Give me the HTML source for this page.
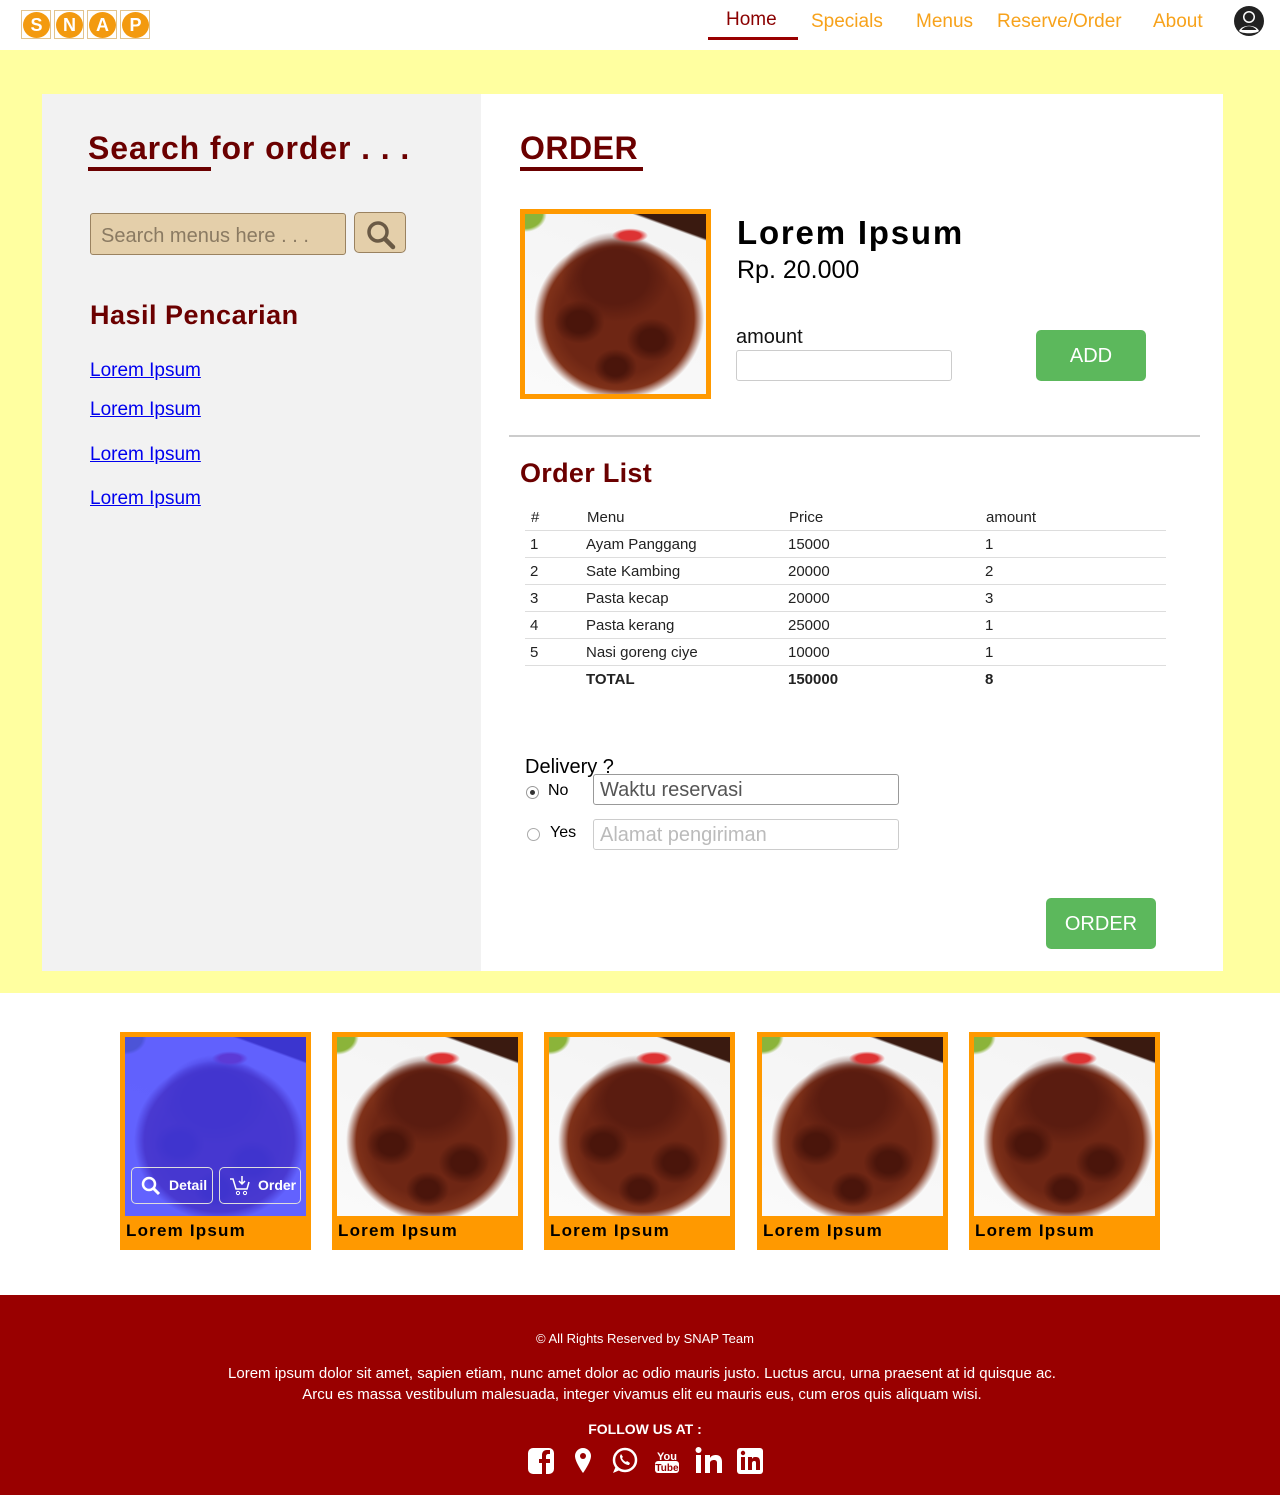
<!DOCTYPE html>
<html><head><meta charset="utf-8"><style>
*{margin:0;padding:0;box-sizing:border-box}
body{width:1280px;height:1495px;position:relative;font-family:"Liberation Sans",sans-serif;background:#fff;overflow:hidden}
.a{position:absolute}
.nav{font-size:19px;color:#f7a21b;top:11px}
.food{background:
radial-gradient(ellipse 10% 4% at 58% 12%, #d33 0 60%, transparent 100%),
radial-gradient(ellipse 14% 12% at 30% 60%, #4a150b 0 50%, transparent 100%),
radial-gradient(ellipse 14% 12% at 70% 70%, #4a150b 0 50%, transparent 100%),
radial-gradient(ellipse 12% 10% at 50% 85%, #4a150b 0 50%, transparent 100%),
radial-gradient(ellipse 30% 25% at 50% 35%, #5a1c10 0 60%, transparent 100%),
radial-gradient(ellipse 47% 45% at 52% 58%, #6e2614 0 70%, #7f3119 88%, rgba(120,50,25,0) 100%),
radial-gradient(ellipse 12% 10% at 0% 0%, #8bb43a 0 80%, transparent 100%),
linear-gradient(200deg,#3a1a10 0 10%, #f4f4f4 11%, #fafafa 100%)}
.logo span{display:inline-block;width:30px;height:29px;border:1px solid #e2c48e;margin-right:3px;position:relative}
.logo span b{position:absolute;left:1px;top:1px;width:27px;height:26px;border-radius:50%;background:#f39a0f;color:#fff;font-size:18px;text-align:center;line-height:26px;font-weight:900}
.lnk{color:#0000ee;text-decoration:underline;font-size:19px;left:90px}
.td{font-size:15px;color:#222}
.row{left:525px;width:641px;height:1px;background:#ddd}
.card{width:191px;height:218px;background:#f90}
.card .food{position:absolute;left:5px;top:5px;width:181px;height:179px}
.card .t{position:absolute;left:6px;top:189px;font-weight:900;font-size:17px;color:#000;letter-spacing:1.2px}
.ic{fill:#fff}
</style></head><body>
<div class="a logo" style="left:21px;top:10px"><span><b>S</b></span><span><b>N</b></span><span><b>A</b></span><span><b>P</b></span></div>
<div class="a nav" style="left:726px;color:#8b0000;top:9px">Home</div>
<div class="a" style="left:708px;top:37px;width:90px;height:3px;background:#990000"></div>
<div class="a nav" style="left:811px">Specials</div>
<div class="a nav" style="left:916px">Menus</div>
<div class="a nav" style="left:997px">Reserve/Order</div>
<div class="a nav" style="left:1153px">About</div>
<svg class="a" style="left:1233px;top:5px" width="32" height="32" viewBox="0 0 32 32"><circle cx="16" cy="16" r="15" fill="#222"/><circle cx="16" cy="12" r="6" fill="#fff"/><path d="M6 26c3-7 17-7 20 0c-3 3-17 3-20 0z" fill="#fff"/><circle cx="16" cy="12" r="4.5" fill="#222"/><path d="M8.5 25c3-5 12-5 15 0z" fill="#222"/></svg>

<div class="a" style="left:0;top:50px;width:1280px;height:943px;background:#ffffa0"></div>
<div class="a" style="left:42px;top:94px;width:439px;height:877px;background:#f2f2f2"></div>
<div class="a" style="left:481px;top:94px;width:742px;height:877px;background:#fff"></div>

<div class="a" style="left:88px;top:130px;font-size:32px;font-weight:bold;color:#6b0000;letter-spacing:0.9px">Search for order . . .</div>
<div class="a" style="left:88px;top:167px;width:123px;height:4px;background:#6b0000"></div>
<div class="a" style="left:90px;top:213px;width:256px;height:42px;background:#e4cfaa;border:1px solid #9a8260;border-radius:3px;font-size:20px;color:#8a7a62;padding:11px 10px">Search menus here . . .</div>
<div class="a" style="left:354px;top:212px;width:52px;height:41px;background:#e4cfaa;border:1px solid #9a8260;border-radius:5px"><svg width="52" height="41"><circle cx="23" cy="19" r="9" fill="none" stroke="#6a5a45" stroke-width="3.5"/><path d="M30 26l8 8" stroke="#6a5a45" stroke-width="4.5" stroke-linecap="round"/></svg></div>
<div class="a" style="left:90px;top:300px;font-size:27px;font-weight:bold;color:#6b0000;letter-spacing:0.5px">Hasil Pencarian</div>
<div class="a lnk" style="top:360px">Lorem Ipsum</div>
<div class="a lnk" style="top:399px">Lorem Ipsum</div>
<div class="a lnk" style="top:444px">Lorem Ipsum</div>
<div class="a lnk" style="top:488px">Lorem Ipsum</div>

<div class="a" style="left:520px;top:130px;font-size:32px;font-weight:bold;color:#6b0000;letter-spacing:0.5px">ORDER</div>
<div class="a" style="left:520px;top:167px;width:123px;height:4px;background:#6b0000"></div>
<div class="a" style="left:520px;top:209px;width:191px;height:190px;background:#f90"><div class="food" style="position:absolute;left:5px;top:5px;width:181px;height:180px"></div></div>
<div class="a" style="left:737px;top:214px;font-size:33px;font-weight:900;color:#000;letter-spacing:1.8px">Lorem Ipsum</div>
<div class="a" style="left:737px;top:256px;font-size:25px;color:#000">Rp. 20.000</div>
<div class="a" style="left:736px;top:326px;font-size:20px;color:#111">amount</div>
<div class="a" style="left:736px;top:350px;width:216px;height:31px;border:1px solid #ccc;border-radius:3px"></div>
<div class="a" style="left:1036px;top:330px;width:110px;height:51px;background:#5cb85c;border-radius:5px;color:#fff;font-size:20px;text-align:center;line-height:53px">ADD</div>
<div class="a" style="left:509px;top:435px;width:691px;height:2px;background:#ccc"></div>
<div class="a" style="left:520px;top:458px;font-size:27px;font-weight:bold;color:#6b0000;letter-spacing:0.3px">Order List</div>

<div class="a td" style="left:531px;top:509px">#</div><div class="a td" style="left:587px;top:509px">Menu</div><div class="a td" style="left:789px;top:509px">Price</div><div class="a td" style="left:986px;top:509px">amount</div>
<div class="a row" style="top:530px"></div>
<div class="a td" style="left:530px;top:536px">1</div><div class="a td" style="left:586px;top:536px">Ayam Panggang</div><div class="a td" style="left:788px;top:536px">15000</div><div class="a td" style="left:985px;top:536px">1</div>
<div class="a row" style="top:557px"></div>
<div class="a td" style="left:530px;top:563px">2</div><div class="a td" style="left:586px;top:563px">Sate Kambing</div><div class="a td" style="left:788px;top:563px">20000</div><div class="a td" style="left:985px;top:563px">2</div>
<div class="a row" style="top:584px"></div>
<div class="a td" style="left:530px;top:590px">3</div><div class="a td" style="left:586px;top:590px">Pasta kecap</div><div class="a td" style="left:788px;top:590px">20000</div><div class="a td" style="left:985px;top:590px">3</div>
<div class="a row" style="top:611px"></div>
<div class="a td" style="left:530px;top:617px">4</div><div class="a td" style="left:586px;top:617px">Pasta kerang</div><div class="a td" style="left:788px;top:617px">25000</div><div class="a td" style="left:985px;top:617px">1</div>
<div class="a row" style="top:638px"></div>
<div class="a td" style="left:530px;top:644px">5</div><div class="a td" style="left:586px;top:644px">Nasi goreng ciye</div><div class="a td" style="left:788px;top:644px">10000</div><div class="a td" style="left:985px;top:644px">1</div>
<div class="a row" style="top:665px"></div>
<div class="a td" style="left:586px;top:671px;font-weight:bold">TOTAL</div><div class="a td" style="left:788px;top:671px;font-weight:bold">150000</div><div class="a td" style="left:985px;top:671px;font-weight:bold">8</div>

<div class="a" style="left:525px;top:756px;font-size:20px;color:#000">Delivery ?</div>
<div class="a" style="left:526px;top:786px;width:13px;height:13px;border:1px solid #999;border-radius:50%"><div style="margin:3px;width:5px;height:5px;border-radius:50%;background:#333"></div></div>
<div class="a" style="left:548px;top:782px;font-size:16px">No</div>
<div class="a" style="left:593px;top:774px;width:306px;height:31px;border:1px solid #999;border-radius:3px;font-size:20px;color:#555;padding:4px 6px">Waktu reservasi</div>
<div class="a" style="left:527px;top:828px;width:13px;height:13px;border:1px solid #aaa;border-radius:50%"></div>
<div class="a" style="left:550px;top:824px;font-size:16px">Yes</div>
<div class="a" style="left:593px;top:819px;width:306px;height:31px;border:1px solid #ccc;border-radius:3px;font-size:20px;color:#bbb;padding:4px 6px">Alamat pengiriman</div>
<div class="a" style="left:1046px;top:898px;width:110px;height:51px;background:#5cb85c;border-radius:5px;color:#fff;font-size:20px;text-align:center;line-height:53px">ORDER</div>

<div class="a card" style="left:120px;top:1032px"><div class="food"></div><div style="position:absolute;left:5px;top:5px;width:181px;height:179px;background:rgba(60,60,255,.8)"></div>
<div style="position:absolute;left:11px;top:135px;width:82px;height:37px;border:1px solid #ddd;border-radius:5px;color:#fff;font-size:14px;font-weight:bold;padding:9px 0 0 37px">Detail<svg style="position:absolute;left:8px;top:7px" width="22" height="22"><circle cx="9" cy="9" r="6" fill="none" stroke="#fff" stroke-width="2.5"/><path d="M13 13l6 6" stroke="#fff" stroke-width="3"/></svg></div>
<div style="position:absolute;left:99px;top:135px;width:82px;height:37px;border:1px solid #ddd;border-radius:5px;color:#fff;font-size:14px;font-weight:bold;padding:9px 0 0 38px">Order<svg style="position:absolute;left:9px;top:6px" width="24" height="24"><path d="M1 5h3l3 10h11l2-7" fill="none" stroke="#fff" stroke-width="1.5"/><path d="M13 2v8m-3-3l3 3 3-3" fill="none" stroke="#fff" stroke-width="1.5"/><circle cx="9" cy="19" r="1.6" fill="none" stroke="#fff"/><circle cx="16" cy="19" r="1.6" fill="none" stroke="#fff"/></svg></div>
<div class="t">Lorem Ipsum</div></div>
<div class="a card" style="left:332px;top:1032px"><div class="food"></div><div class="t">Lorem Ipsum</div></div>
<div class="a card" style="left:544px;top:1032px"><div class="food"></div><div class="t">Lorem Ipsum</div></div>
<div class="a card" style="left:757px;top:1032px"><div class="food"></div><div class="t">Lorem Ipsum</div></div>
<div class="a card" style="left:969px;top:1032px"><div class="food"></div><div class="t">Lorem Ipsum</div></div>

<div class="a" style="left:0;top:1295px;width:1280px;height:200px;background:#990000;color:#fff;text-align:center">
<div style="position:absolute;top:36px;width:100%;font-size:13px;left:5px">© All Rights Reserved by SNAP Team</div>
<div style="position:absolute;top:68px;width:100%;font-size:15px;line-height:21px;left:2px">Lorem ipsum dolor sit amet, sapien etiam, nunc amet dolor ac odio mauris justo. Luctus arcu, urna praesent at id quisque ac.<br>Arcu es massa vestibulum malesuada, integer vivamus elit eu mauris eus, cum eros quis aliquam wisi.</div>
<div style="position:absolute;top:126px;width:100%;font-size:14px;font-weight:bold;left:5px">FOLLOW US AT :</div>
<svg style="position:absolute;left:526px;top:150px" width="240" height="32">
<rect x="2" y="3" width="26" height="26" rx="5" class="ic"/><path d="M20 29V18h4v-4h-4v-3c0-1 1-2 2-2h2V5h-3c-4 0-5 3-5 5v4h-3v4h3v11z" fill="#900"/>
<path d="M57 3a8 8 0 0 0-8 8c0 6 8 17 8 17s8-11 8-17a8 8 0 0 0-8-8z" class="ic"/><circle cx="57" cy="11" r="3" fill="#900"/>
<circle cx="99" cy="15" r="11" fill="none" stroke="#fff" stroke-width="2.5"/><path d="M90 21l-3 7 7-3z" class="ic"/><path d="M94 11c0 4 4 9 9 9l1-2-3-2-1 1c-2-1-3-2-4-4l1-1-2-3z" class="ic"/>
<text x="141" y="15" font-size="11" font-weight="bold" fill="#fff" font-family="Liberation Sans" text-anchor="middle">You</text><rect x="129" y="16" width="24" height="12" rx="3" class="ic"/><text x="141" y="26" font-size="10" font-weight="bold" fill="#900" font-family="Liberation Sans" text-anchor="middle">Tube</text>
<rect x="170" y="10" width="5" height="18" class="ic"/><circle cx="172.5" cy="5" r="3" class="ic"/><path d="M179 10h5v3c1-2 3-3 6-3 4 0 6 3 6 7v11h-5V18c0-2-1-3-3-3s-4 1-4 3v10h-5z" class="ic"/>
<rect x="211" y="3" width="26" height="26" rx="3" class="ic"/><rect x="215" y="12" width="4" height="13" fill="#900"/><circle cx="217" cy="8" r="2.2" fill="#900"/><path d="M222 12h4v2c1-2 2-2 4-2 3 0 4 2 4 5v8h-4v-7c0-2-1-2-2-2s-2 1-2 2v7h-4z" fill="#900"/>
</svg>
</div>
</body></html>
